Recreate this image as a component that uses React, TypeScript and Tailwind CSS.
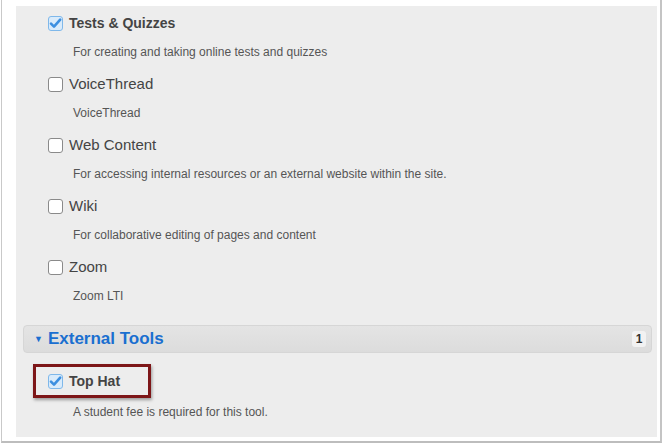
import React from 'react';

type Tool = { name: string; desc: string; checked?: boolean };

const tools: Tool[] = [
  { name: 'Tests & Quizzes', desc: 'For creating and taking online tests and quizzes', checked: true },
  { name: 'VoiceThread', desc: 'VoiceThread' },
  { name: 'Web Content', desc: 'For accessing internal resources or an external website within the site.' },
  { name: 'Wiki', desc: 'For collaborative editing of pages and content' },
  { name: 'Zoom', desc: 'Zoom LTI' },
];

function Checkbox({ checked }: { checked?: boolean }) {
  if (checked) {
    return (
      <svg width="15" height="15" viewBox="0 0 15 15" className="shrink-0">
        <rect x="0.5" y="0.5" width="14" height="14" rx="2.5" fill="#d9ebfb" stroke="#7fb8ea" />
        <path d="M3 7.6 L6 10.6 L12.2 3.6" fill="none" stroke="#3c8fe0" strokeWidth="2.6" strokeLinecap="round" strokeLinejoin="round" />
      </svg>
    );
  }
  return <span className="block h-[15px] w-[15px] shrink-0 rounded-[3px] border border-[#8a8a8a] bg-white" />;
}

function ToolItem({ tool }: { tool: Tool }) {
  return (
    <div className="mb-[8px]">
      <div className="flex h-[24px] items-center gap-[6px] pl-[32px]">
        <Checkbox checked={tool.checked} />
        <span className={tool.checked ? 'text-[14px] font-bold text-[#444]' : 'text-[15px] text-[#444]'}>
          {tool.name}
        </span>
      </div>
      <div className="mt-[5px] flex h-[24px] items-center pl-[57px] text-[12px] text-[#555]">{tool.desc}</div>
    </div>
  );
}

export default function App() {
  return (
    <div className="h-[444px] w-[663px] overflow-hidden bg-white font-['Liberation_Sans',Arial,sans-serif]">
      <div className="ml-px h-[443px] w-[661px] border-b-2 border-l border-r-2 border-b-[#bdbdbd] border-l-[#c9c9c9] border-r-[#c4c4c4] bg-white pb-[5px] pl-[14px] pr-[3px] pt-[6px]">
        <div className="flex h-[431px] w-[641px] flex-col bg-[#ededed] pt-[5px]">
          {tools.map((t) => (
            <ToolItem key={t.name} tool={t} />
          ))}

          <div className="ml-[7px] mr-[5px] mt-[9px] flex h-[28px] items-center rounded-[4px] border border-[#d6d6d6] bg-[linear-gradient(#e4e4e4,#dcdcdc)] pl-[10px] pr-[5px]">
            <span className="text-[9px] leading-none text-[#1a6fd0]">▼</span>
            <span className="ml-[5px] text-[17px] font-bold text-[#1a6fd0]">External Tools</span>
            <span className="ml-auto flex h-[16px] w-[14px] items-center justify-center rounded-[3px] bg-[#f2f2f2] text-[12px] font-bold text-[#333]">
              1
            </span>
          </div>

          <div className="ml-[17px] mt-[11px] flex h-[34px] w-[118px] items-center gap-[6px] border-[3px] border-[#7d1618] pl-[12px] shadow-[1px_2px_3px_rgba(0,0,0,0.35)]">
            <Checkbox checked />
            <span className="text-[14px] font-bold text-[#444]">Top Hat</span>
          </div>
          <div className="mt-[4px] flex h-[20px] items-center pl-[57px] text-[12px] text-[#555]">
            A student fee is required for this tool.
          </div>
        </div>
      </div>
    </div>
  );
}
